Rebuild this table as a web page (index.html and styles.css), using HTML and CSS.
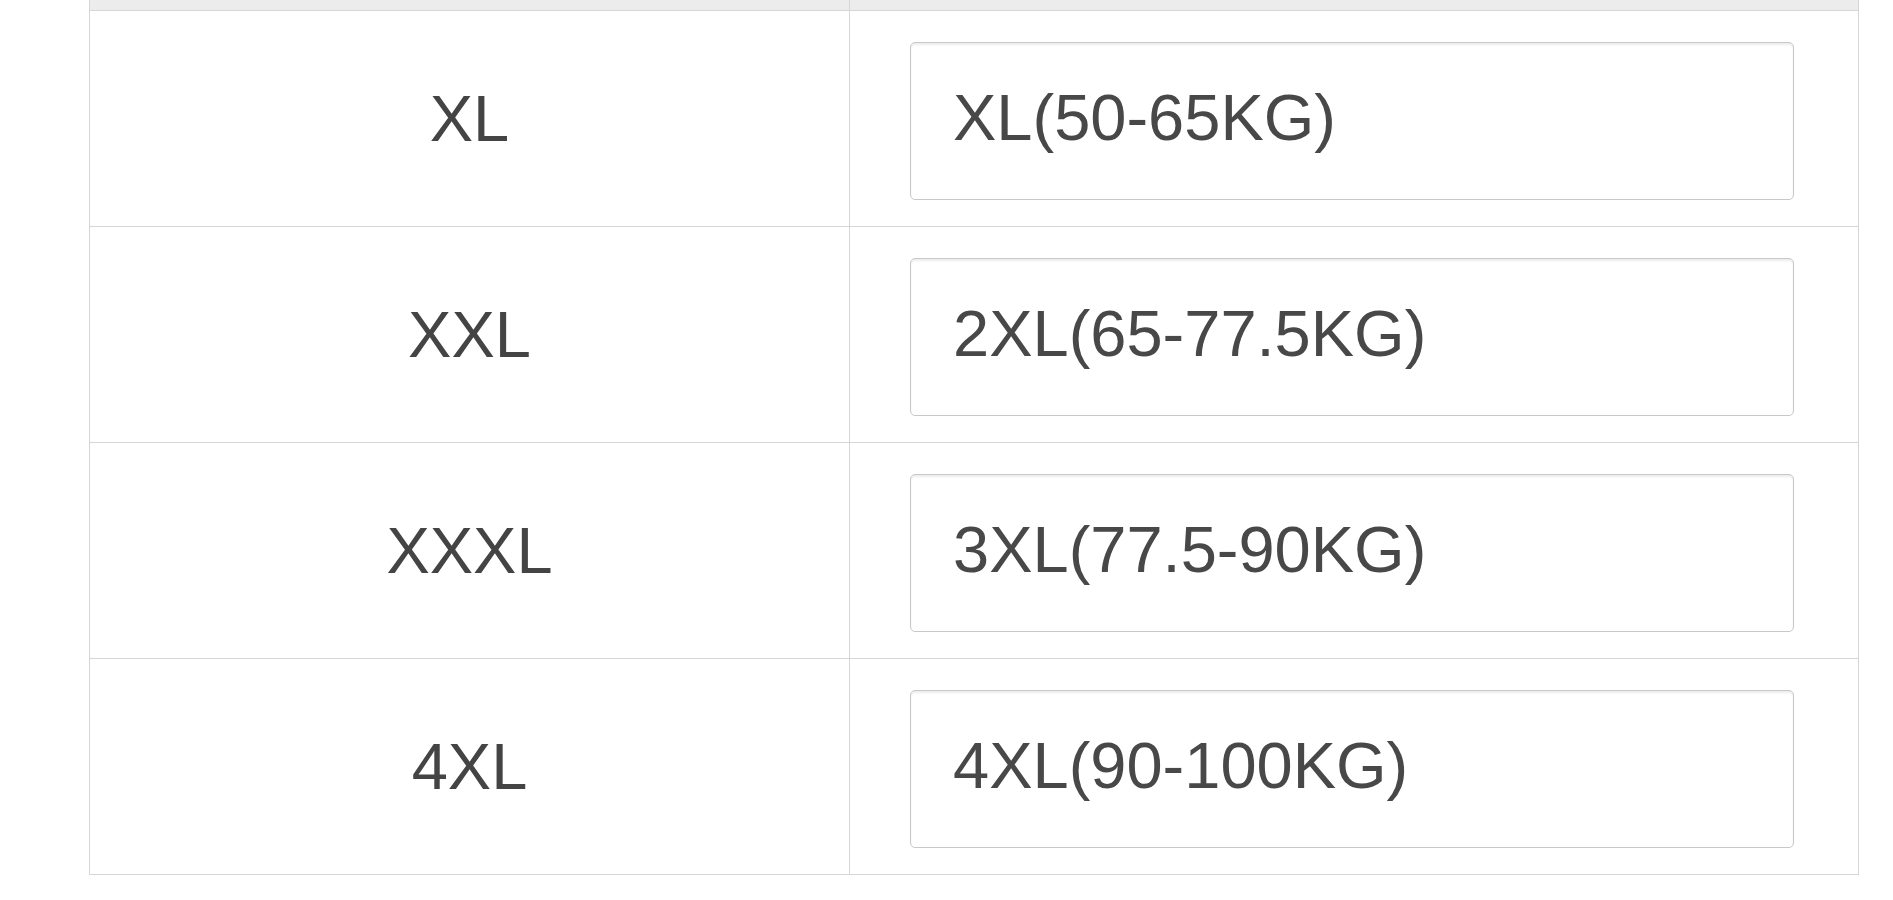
FILE: index.html
```html
<!DOCTYPE html>
<html>
<head>
<meta charset="utf-8">
<title>Sizes</title>
<link rel="stylesheet" href="styles.css">
</head>
<body>
<div class="wrap">
  <table class="size-table">
    <thead>
      <tr class="head-row"><th class="col-size"></th><th class="col-label"></th></tr>
    </thead>
    <tbody>
      <tr>
        <td class="size">XL</td>
        <td class="field"><input class="form-control" type="text" value="XL(50-65KG)"></td>
      </tr>
      <tr>
        <td class="size">XXL</td>
        <td class="field"><input class="form-control" type="text" value="2XL(65-77.5KG)"></td>
      </tr>
      <tr>
        <td class="size">XXXL</td>
        <td class="field"><input class="form-control" type="text" value="3XL(77.5-90KG)"></td>
      </tr>
      <tr>
        <td class="size">4XL</td>
        <td class="field"><input class="form-control" type="text" value="4XL(90-100KG)"></td>
      </tr>
    </tbody>
  </table>
</div>
</body>
</html>
```
FILE: styles.css
```css
html, body {
  margin: 0;
  padding: 0;
  background: #fff;
}
body {
  font-family: "Liberation Sans", Arial, sans-serif;
  color: #333;
}
.wrap {
  padding-left: 89px;
}
.size-table {
  width: 1770px;
  border-collapse: collapse;
  table-layout: fixed;
}
.col-size {
  width: 759px;
}
.head-row th {
  height: 10px;
  padding: 0;
  background: #ececec;
  border: 1px solid #d6d6d6;
  border-top: none;
}
.size-table td {
  border: 1px solid #d6d6d6;
  vertical-align: middle;
}
.size {
  text-align: center;
  font-size: 65px;
  color: #444;
  height: 215px;
  padding: 0;
}
.field {
  padding: 30px 64px 26px 60px;
}
.form-control {
  display: block;
  box-sizing: border-box;
  width: 100%;
  height: 158px;
  margin: 0;
  padding: 37px 42px 44px 42px;
  font-family: "Liberation Sans", Arial, sans-serif;
  font-size: 65px;
  line-height: normal;
  color: #484848;
  background: #fff;
  border: 1px solid #c8c8c8;
  border-radius: 5px;
  box-shadow: inset 0 2px 2px rgba(0, 0, 0, 0.08);
  outline: none;
}
```
